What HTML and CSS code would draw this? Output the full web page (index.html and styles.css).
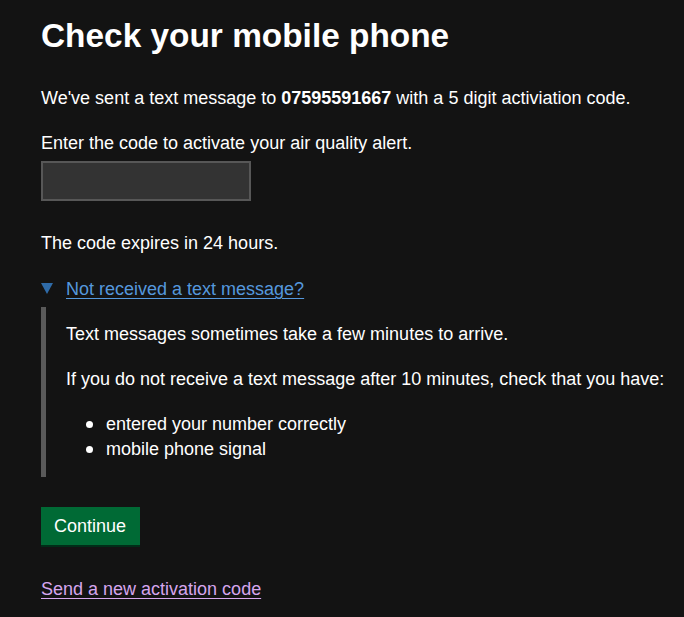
FILE: index.html
```html
<!DOCTYPE html>
<html lang="en">
<head>
<meta charset="utf-8">
<title>Check your mobile phone</title>
<link rel="stylesheet" href="styles.css">
</head>
<body>
<main class="main">
  <h1 class="heading">Check your mobile phone</h1>
  <p class="body">We've sent a text message to <strong class="bold">07595591667</strong> with a 5 digit activiation code.</p>
  <div class="form-group">
    <label class="label" for="code">Enter the code to activate your air quality alert.</label>
    <input class="input" id="code" type="text">
  </div>
  <p class="body">The code expires in 24 hours.</p>
  <details class="details" open>
    <summary class="summary">
      <svg class="arrow" width="12" height="11" viewBox="0 0 12 11"><polygon points="0,0 12,0 6,11" fill="#2f6ba8"/></svg>
      <span class="summary-text">Not received a text message?</span>
    </summary>
    <div class="details-text">
      <p class="body">Text messages sometimes take a few minutes to arrive.</p>
      <p class="body">If you do not receive a text message after 10 minutes, check that you have:</p>
      <ul class="list">
        <li class="item">entered your number correctly</li>
        <li class="item">mobile phone signal</li>
      </ul>
    </div>
  </details>
  <button class="button" type="button">Continue</button>
  <p class="body"><a class="link-visited" href="#">Send a new activation code</a></p>
</main>
</body>
</html>
```
FILE: styles.css
```css
html, body {
  margin: 0;
  padding: 0;
  background: #131313;
}
body {
  font-family: "Liberation Sans", Arial, sans-serif;
  color: #ffffff;
  font-size: 18px;
  line-height: 25px;
}
.main {
  padding: 16px 0 0 41px;
}
.heading {
  font-size: 33.4px;
  line-height: 40px;
  font-weight: 700;
  margin: 0 0 30px;
}
.body {
  margin: 0 0 20px;
}
.bold {
  font-weight: 700;
}
.form-group {
  margin-bottom: 30px;
}
.label {
  display: block;
  margin-bottom: 5px;
}
.input {
  display: block;
  box-sizing: border-box;
  width: 210px;
  height: 40px;
  margin: 0;
  background: #333333;
  border: 2px solid #575757;
  border-radius: 0;
  color: #fff;
  font: inherit;
  padding: 5px;
}
.details {
  margin-bottom: 30px;
}
.summary {
  display: inline-flex;
  align-items: flex-start;
  list-style: none;
  margin-bottom: 5px;
  cursor: pointer;
}
.summary::-webkit-details-marker {
  display: none;
}
.arrow {
  display: block;
  margin: 6px 13px 0 0;
}
.summary-text {
  color: #5598dd;
  text-decoration: underline;
  text-decoration-thickness: 1px;
  text-underline-offset: 3px;
}
.details-text {
  border-left: 5px solid #5a5a5a;
  padding: 15px 15px 15px 20px;
}
.details-text .body:last-child,
.list {
  margin: 0;
}
.list {
  padding: 0;
  list-style: none;
}
.item {
  display: flex;
  align-items: flex-start;
}
.item::before {
  content: "";
  flex: none;
  width: 7px;
  height: 7px;
  border-radius: 50%;
  background: #ffffff;
  margin: 9px 13px 0 20px;
}
.button {
  display: block;
  margin: 0 0 32px;
  padding: 8px 12px 7px 11px;
  border: 2px solid transparent;
  border-radius: 0;
  background: #006a35;
  box-shadow: 0 2px 0 #002d18;
  color: #ffffff;
  font-family: inherit;
  font-size: 18px;
  line-height: 19px;
  cursor: pointer;
}
.link-visited {
  color: #d6a6ee;
  text-decoration: underline;
  text-decoration-thickness: 1px;
  text-underline-offset: 3px;
}
```
